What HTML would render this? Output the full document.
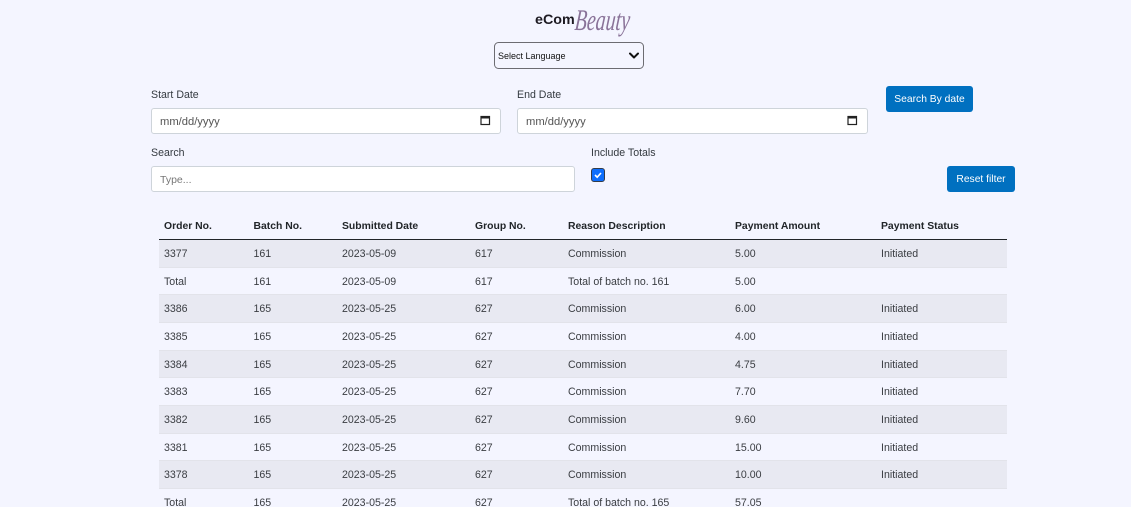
<!DOCTYPE html>
<html><head><meta charset="utf-8"><style>
html,body{margin:0;padding:0;width:1131px;height:507px;overflow:hidden;background:#f4f5ff;font-family:"Liberation Sans",sans-serif;color:#212529}
#w{position:relative;width:1131px;height:507px;overflow:hidden}
.a{position:absolute;white-space:nowrap}
.l{font-size:10.6px;line-height:14px;color:#343a40}
.i{position:absolute;box-sizing:border-box;background:#fff;border:1px solid #ced4da;border-radius:3px;font-size:11.2px;color:#555;padding-left:8px;padding-top:1px;display:flex;align-items:center}
.b{position:absolute;box-sizing:border-box;background:#0070c0;color:#fff;border-radius:3px;font-size:10.300px;display:flex;align-items:center;justify-content:center}
.r{position:absolute;left:159px;width:848px;height:27.67px;box-sizing:border-box;border-bottom:1px solid #e2e3ea;font-size:10.6px;color:#3a3d42}
.s{background:#e8e9f2}
.r span{position:absolute;top:7px;line-height:14px;white-space:nowrap}
.h{position:absolute;top:220px;font-size:10.400px;line-height:14px;font-weight:bold;color:#212529;white-space:nowrap}
.c1{left:5px}.c2{left:94.5px}.c3{left:183px}.c4{left:316px}.c5{left:409px}.c6{left:576px}.c7{left:722px}
</style></head><body><div id="w">
<div class="a" style="left:535px;top:12px;font-size:13.500px;font-weight:bold;line-height:15px;color:#1d1a22;transform:scaleX(1.06);transform-origin:left">eCom</div>
<div class="a" style="left:575px;top:6px;font-family:'Liberation Serif',serif;font-style:italic;font-size:30px;line-height:30px;color:#8a7399;transform:scaleX(.66) skewX(-8deg);transform-origin:left">Beauty</div>

<svg class="a" style="left:494px;top:42px" width="150" height="27"><rect x=".5" y=".5" width="149" height="26" rx="4" fill="#f4f5ff" stroke="#6c6c72"/><path d="M136 11.500l4 4 4-4" fill="none" stroke="#111" stroke-width="2" stroke-linecap="round" stroke-linejoin="round"/></svg>
<div class="a" style="left:498px;top:49px;font-size:9px;line-height:14px;color:#111">Select Language</div>

<div class="a l" style="left:151px;top:88px">Start Date</div>
<div class="i" style="left:151px;top:108px;width:350px;height:26px">mm/dd/yyyy</div>
<svg class="a" style="left:480px;top:115px" width="11" height="11"><rect x="1" y="1.500" width="8.500" height="8" fill="none" stroke="#222" stroke-width="1.200"/><rect x="1" y="1" width="8.500" height="2.500" fill="#222"/></svg>
<div class="a l" style="left:517px;top:88px">End Date</div>
<div class="i" style="left:517px;top:108px;width:351px;height:26px">mm/dd/yyyy</div>
<svg class="a" style="left:847px;top:115px" width="11" height="11"><rect x="1" y="1.500" width="8.500" height="8" fill="none" stroke="#222" stroke-width="1.200"/><rect x="1" y="1" width="8.500" height="2.500" fill="#222"/></svg>
<div class="b" style="left:886px;top:86px;width:87px;height:26px">Search By date</div>

<div class="a l" style="left:151px;top:146px">Search</div>
<div class="i" style="left:151px;top:166px;width:424px;height:26px;color:#777;font-size:10.500px">Type...</div>
<div class="a l" style="left:591px;top:146px">Include Totals</div>
<svg class="a" style="left:591px;top:168px" width="14" height="14"><rect x=".5" y=".5" width="13" height="13" rx="2.500" fill="#0d6efd" stroke="#333c4a"/><path d="M4 7l2.200 2.200L10 5" fill="none" stroke="#fff" stroke-width="1.600"/></svg>
<div class="b" style="left:947px;top:166px;width:68px;height:26px">Reset filter</div>

<div class="a" style="left:159px;top:239px;width:848px;height:1px;background:#212529"></div>
<div class="h" style="left:164px">Order No.</div>
<div class="h" style="left:253.500px">Batch No.</div>
<div class="h" style="left:342px">Submitted Date</div>
<div class="h" style="left:475px">Group No.</div>
<div class="h" style="left:568px">Reason Description</div>
<div class="h" style="left:735px">Payment Amount</div>
<div class="h" style="left:881px">Payment Status</div>

<div class="r s" style="top:240px"><span class="c1">3377</span><span class="c2">161</span><span class="c3">2023-05-09</span><span class="c4">617</span><span class="c5">Commission</span><span class="c6">5.00</span><span class="c7">Initiated</span></div>
<div class="r" style="top:267.670px"><span class="c1">Total</span><span class="c2">161</span><span class="c3">2023-05-09</span><span class="c4">617</span><span class="c5">Total of batch no. 161</span><span class="c6">5.00</span></div>
<div class="r s" style="top:295.330px"><span class="c1">3386</span><span class="c2">165</span><span class="c3">2023-05-25</span><span class="c4">627</span><span class="c5">Commission</span><span class="c6">6.00</span><span class="c7">Initiated</span></div>
<div class="r" style="top:323px"><span class="c1">3385</span><span class="c2">165</span><span class="c3">2023-05-25</span><span class="c4">627</span><span class="c5">Commission</span><span class="c6">4.00</span><span class="c7">Initiated</span></div>
<div class="r s" style="top:350.670px"><span class="c1">3384</span><span class="c2">165</span><span class="c3">2023-05-25</span><span class="c4">627</span><span class="c5">Commission</span><span class="c6">4.75</span><span class="c7">Initiated</span></div>
<div class="r" style="top:378.330px"><span class="c1">3383</span><span class="c2">165</span><span class="c3">2023-05-25</span><span class="c4">627</span><span class="c5">Commission</span><span class="c6">7.70</span><span class="c7">Initiated</span></div>
<div class="r s" style="top:406px"><span class="c1">3382</span><span class="c2">165</span><span class="c3">2023-05-25</span><span class="c4">627</span><span class="c5">Commission</span><span class="c6">9.60</span><span class="c7">Initiated</span></div>
<div class="r" style="top:433.670px"><span class="c1">3381</span><span class="c2">165</span><span class="c3">2023-05-25</span><span class="c4">627</span><span class="c5">Commission</span><span class="c6">15.00</span><span class="c7">Initiated</span></div>
<div class="r s" style="top:461.330px"><span class="c1">3378</span><span class="c2">165</span><span class="c3">2023-05-25</span><span class="c4">627</span><span class="c5">Commission</span><span class="c6">10.00</span><span class="c7">Initiated</span></div>
<div class="r" style="top:489px"><span class="c1">Total</span><span class="c2">165</span><span class="c3">2023-05-25</span><span class="c4">627</span><span class="c5">Total of batch no. 165</span><span class="c6">57.05</span></div>
</div></body></html>
